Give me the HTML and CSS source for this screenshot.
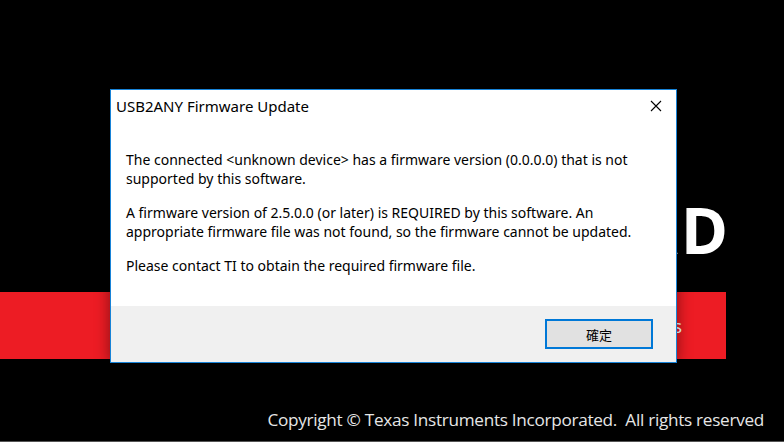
FILE: index.html
```html
<!DOCTYPE html>
<html lang="zh-Hant">
<head>
    <meta charset="UTF-8">
    <meta name="viewport" content="width=device-width, initial-scale=1.0">
    <title>USB2ANY Firmware Update</title>
    <link rel="stylesheet" href="styles.css">
</head>
<body>
    <div class="splash">
        <div class="brand">LOAD</div>
        <div class="band">
            <span class="band-text">Texas Instruments</span>
        </div>
        <div class="copyright">Copyright © Texas Instruments Incorporated.&nbsp; All rights reserved</div>
    </div>

    <div class="dialog">
        <div class="dialog-title">
            <span>USB2ANY Firmware Update</span>
            <button class="close" aria-label="Close">
                <svg width="12" height="12" viewBox="0 0 12 12">
                    <path d="M1 1 L11 11 M11 1 L1 11" stroke="#000" stroke-width="1.1" fill="none"/>
                </svg>
            </button>
        </div>
        <div class="dialog-body">
            <p>The connected &lt;unknown device&gt; has a firmware version (0.0.0.0) that is not supported by this software.</p>
            <p>A firmware version of 2.5.0.0 (or later) is REQUIRED by this software. An appropriate firmware file was not found, so the firmware cannot be updated.</p>
            <p>Please contact TI to obtain the required firmware file.</p>
        </div>
        <div class="dialog-footer">
            <button class="ok">確定</button>
        </div>
    </div>
</body>
</html>
```

FILE: styles.css
```css
html, body {
    margin: 0;
    height: 100%;
}

body {
    background: #000;
    font-family: "Open Sans", "Noto Sans", sans-serif;
    overflow: hidden;
    position: relative;
    border-bottom: 1px solid #555;
    box-sizing: border-box;
}

.splash {
    height: 100%;
    display: flex;
    flex-direction: column;
}

.brand {
    margin-top: 193px;
    width: 731px;
    height: 74px;
    text-align: right;
    color: #fff;
    font-family: "Open Sans", sans-serif;
    font-weight: 700;
    font-size: 64px;
    line-height: 74px;
    letter-spacing: 3px;
}

.band {
    margin-top: 25px;
    width: 726px;
    height: 67px;
    background: #ed1c24;
    display: flex;
    align-items: center;
    justify-content: flex-end;
    padding-right: 44px;
    box-sizing: border-box;
}

.band-text {
    color: #fff;
    font-size: 19px;
}

.copyright {
    margin-top: auto;
    margin-bottom: 10px;
    padding-right: 20px;
    text-align: right;
    color: #e6e6e6;
    font-family: "Open Sans", sans-serif;
    font-size: 17.2px;
    letter-spacing: -0.3px;
}

.dialog {
    position: absolute;
    left: 110px;
    top: 89px;
    width: 567px;
    height: 274px;
    box-sizing: border-box;
    border: 1px solid #1883d7;
    background: #fff;
    box-shadow: 0 0 14px rgba(0, 0, 0, 0.45);
    display: flex;
    flex-direction: column;
    font-family: "Noto Sans", sans-serif;
    color: #000;
}

.dialog-title {
    height: 31px;
    display: flex;
    align-items: center;
    justify-content: space-between;
    padding-left: 5px;
    font-size: 15px;
}

.close {
    width: 40px;
    height: 31px;
    border: none;
    background: transparent;
    display: flex;
    align-items: center;
    justify-content: center;
    padding: 0;
}

.dialog-body {
    flex: 1;
    padding: 29px 20px 0 15px;
    font-size: 14px;
    line-height: 19px;
}

.dialog-body p {
    margin: 0 0 15px;
}

.dialog-footer {
    height: 56px;
    background: #f0f0f0;
    display: flex;
    align-items: center;
    justify-content: flex-end;
    padding-right: 23px;
}

.ok {
    width: 108px;
    height: 30px;
    box-sizing: border-box;
    border: 2px solid #0078d7;
    background: #e1e1e1;
    font-family: "Noto Sans CJK TC", sans-serif;
    font-size: 13px;
    color: #000;
    padding: 0;
}
```
